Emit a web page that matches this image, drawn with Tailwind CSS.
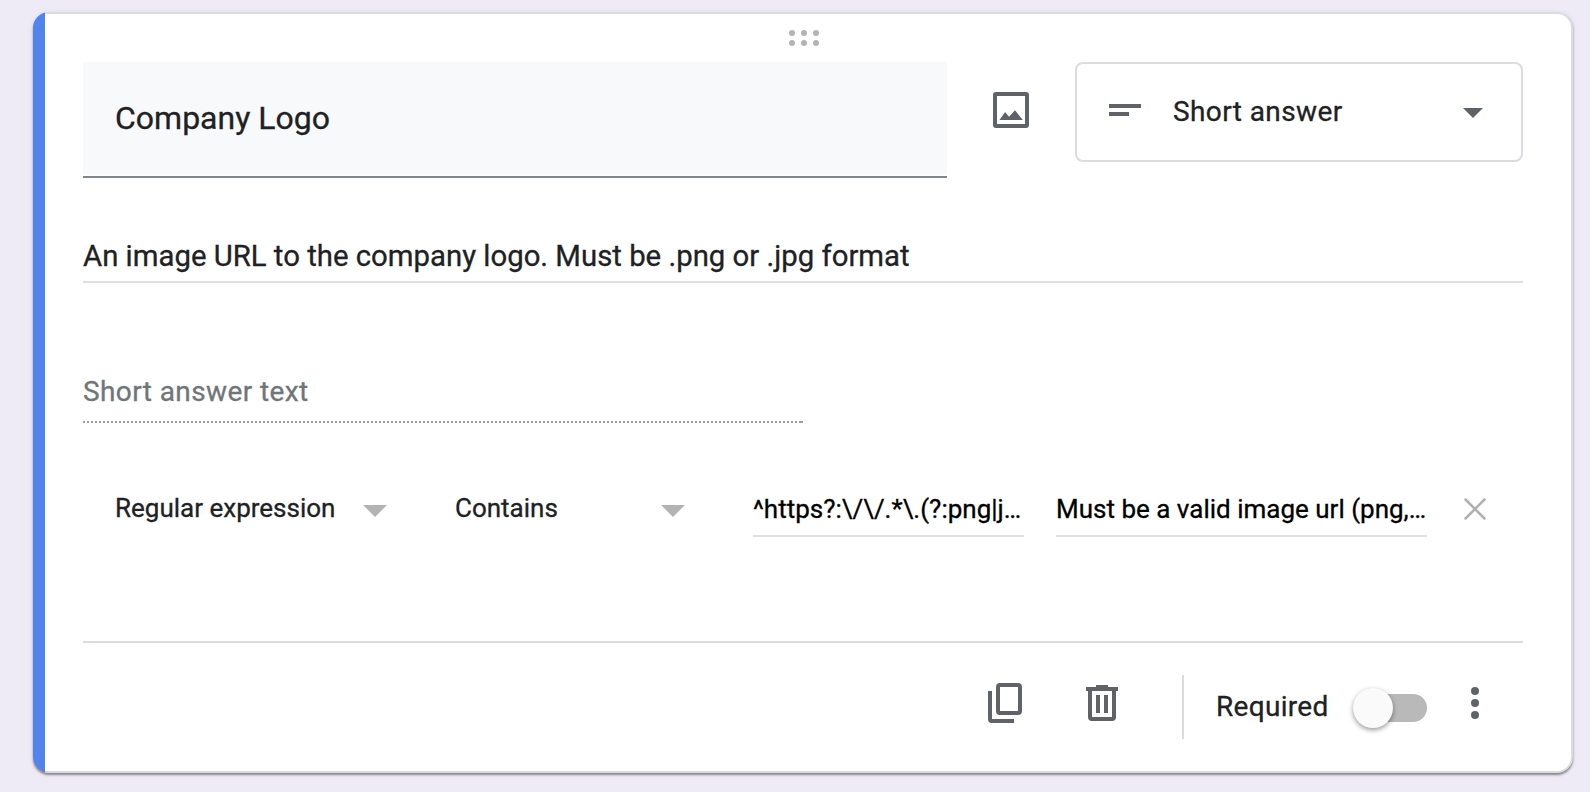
<!DOCTYPE html>
<html lang="en">
<head>
<meta charset="utf-8">
<title>Form question</title>
<script src="https://cdn.jsdelivr.net/npm/@tailwindcss/browser@4"></script>
</head>
<body class="h-[792px] w-[1590px] overflow-hidden bg-[#eeebf6] pt-3 pl-[33px] font-[Roboto,sans-serif] text-[#202124] [-webkit-text-stroke:0.3px]">
<main class="flex h-[761px] w-[1540px] overflow-hidden rounded-2xl bg-[#dadce0] shadow-[0_2px_2px_rgba(0,0,0,0.38),0_1px_5px_rgba(60,40,90,0.12)]">
  <div class="w-3 shrink-0 bg-[#5383ec]"></div>
  <div class="mt-0.5 mr-0.5 mb-0.5 flex flex-1 flex-col rounded-r-[14px] bg-white pl-[38px] pr-12">
    <div class="flex h-12 justify-center pt-4 pl-[2px]">
      <svg class="h-4 w-[30px]" viewBox="0 0 30 16" fill="#b3b3b3"><circle cx="3" cy="3" r="3"/><circle cx="15" cy="3" r="3"/><circle cx="27" cy="3" r="3"/><circle cx="3" cy="13" r="3"/><circle cx="15" cy="13" r="3"/><circle cx="27" cy="13" r="3"/></svg>
    </div>
    <div class="flex h-[116px]">
      <div class="h-[116px] w-[864px] border-b-2 border-[#80868b]">
        <div class="flex h-28 items-center bg-[#f8f9fb] pl-8"><span class="text-[32px] leading-[48px]">Company Logo</span></div>
      </div>
      <svg class="mt-6 ml-10 size-12" viewBox="0 0 24 24" fill="#5f6368"><path fill-rule="evenodd" d="M4.500 3h15A1.500 1.500 0 0 1 21 4.500v15a1.500 1.500 0 0 1-1.500 1.500h-15A1.500 1.500 0 0 1 3 19.500v-15A1.500 1.500 0 0 1 4.500 3zM5 5v14h14V5zM6.250 17l2.800-4 1.950 2.400L14 12.100 17.900 17z"/></svg>
      <div class="ml-10 flex h-[100px] w-[448px] items-center rounded-lg border-2 border-[#dadce0] pl-8 pr-[38px]">
        <svg class="mb-1 h-3 w-8" viewBox="0 0 32 12" fill="#5f6368"><path d="M0 0h32v4H0zM0 8h20v4H0z"/></svg>
        <span class="ml-8 text-[28px] leading-10 tracking-[0.4px]">Short answer</span>
        <svg class="mt-0.5 ml-auto h-[10px] w-5" viewBox="0 0 20 10" fill="#5f6368"><path d="M0 0h20L10 10z"/></svg>
      </div>
    </div>
    <div class="mt-[58px] flex h-[47px] items-start border-b-2 border-[#e0e0e0]"><span class="text-[29.333px] leading-10">An image URL to the company logo. Must be .png or .jpg format</span></div>
    <div class="mt-[89px] flex h-[49px] text-[#70757a]"><span class="text-[28px] leading-10 tracking-[0.4px]">Short answer text</span></div>
    <svg class="h-0.5 w-[720px]" viewBox="0 0 720 2"><path d="M0 1H718M718 1h2" stroke="#9e9e9e" stroke-width="2" stroke-dasharray="2 2"/></svg>
    <div class="mt-[66px] flex h-12 text-[26px] leading-10">
      <div class="flex w-[304px] pl-8 whitespace-nowrap"><span class="-mt-px">Regular expression</span><svg class="mt-4 ml-auto h-3 w-6" viewBox="0 0 24 12" fill="#b3b3b3"><path d="M0 0h24L12 12z"/></svg></div>
      <div class="ml-[36px] flex w-[262px] pl-8"><span class="-mt-px">Contains</span><svg class="mt-4 ml-auto h-3 w-6" viewBox="0 0 24 12" fill="#b3b3b3"><path d="M0 0h24L12 12z"/></svg></div>
      <div class="ml-[68px] h-12 w-[271px] border-b-2 border-[#e0e0e0] text-black"><span>^https?:\/\/.*\.(?:png|j…</span></div>
      <div class="ml-8 h-12 w-[371px] border-b-2 border-[#e0e0e0] text-black"><span>Must be a valid image url (png,…</span></div>
      <svg class="mt-[9px] ml-[37px] size-[22px]" viewBox="0 0 22 22" fill="none" stroke="#b0b0b0" stroke-width="2.500" stroke-linecap="round"><path d="M1.500 1.500l19 19M20.500 1.500l-19 19"/></svg>
    </div>
    <div class="mt-[104px] flex h-[100px] border-t-2 border-[#dadce0]">
      <svg class="mt-10 ml-[905px] h-10 w-[34px]" viewBox="0 0 34 40" fill="none" stroke="#5f6368" stroke-width="4"><rect x="10" y="2" width="22" height="28" rx="2"/><path d="M2 8v28a2 2 0 0 0 2 2h22"/></svg>
      <svg class="mt-[42px] ml-16 h-9 w-8" viewBox="0 0 32 36" fill="#5f6368"><path fill-rule="evenodd" d="M10 0h12v2h10v4h-2v26a4 4 0 0 1-4 4H6a4 4 0 0 1-4-4V6H0V2h10zM6 6v26h20V6zM10 10h4v18h-4zM18 10h4v18h-4z"/></svg>
      <div class="mt-8 ml-16 h-16 w-0.5 bg-[#dadce0]"></div>
      <span class="mt-[44px] ml-8 text-[28px] leading-10 tracking-[0.3px]">Required</span>
      <div class="mt-[51px] ml-auto h-7 w-[68px] rounded-full bg-[#b9b9b9]"><div class="-mt-1.5 -ml-1.5 size-10 rounded-full bg-[#fafafa] shadow-[0_2px_5px_rgba(0,0,0,0.4)]"></div></div>
      <svg class="mt-11 mr-11 ml-11 h-8 w-2" viewBox="0 0 8 32" fill="#5f6368"><circle cx="4" cy="4" r="4"/><circle cx="4" cy="16" r="4"/><circle cx="4" cy="28" r="4"/></svg>
    </div>
  </div>
</main>
</body>
</html>
